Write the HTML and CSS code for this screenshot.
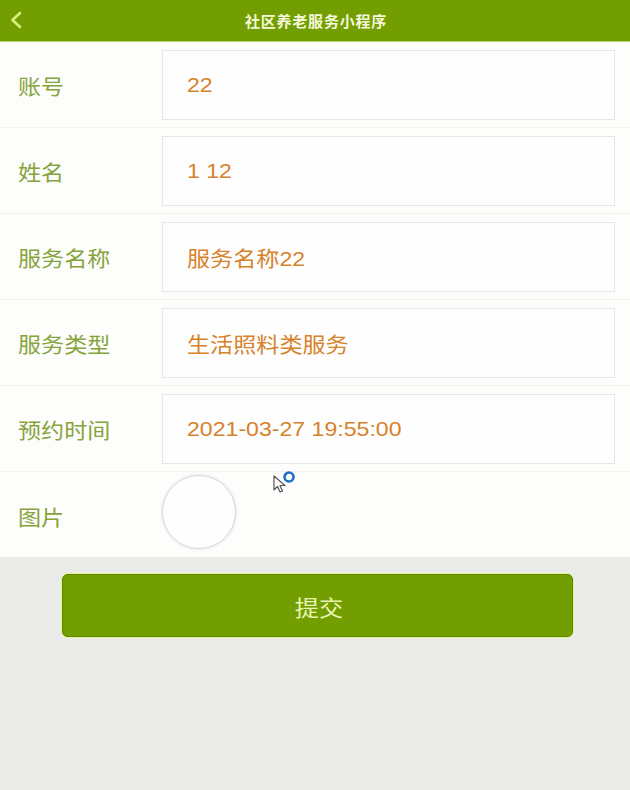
FILE: index.html
```html
<!DOCTYPE html>
<html lang="zh">
<head>
<meta charset="utf-8">
<link rel="stylesheet" href="styles.css">
</head>
<body>
<div class="app">
  <header class="bar">
    <svg class="back" width="14" height="18" viewBox="0 0 14 18"><path d="M11 2 L3.5 9 L11 16" fill="none" stroke="#d9f27a" stroke-width="2.6" stroke-linecap="round" stroke-linejoin="round"/></svg>
    <div class="title">社区养老服务小程序</div>
  </header>
  <main class="form">
    <div class="row"><div class="label"><span class="wide">账号</span></div><div class="field"><span class="wide">22</span></div></div>
    <div class="row"><div class="label"><span class="wide">姓名</span></div><div class="field"><span class="wide">1 12</span></div></div>
    <div class="row"><div class="label"><span class="wide">服务名称</span></div><div class="field"><span class="wide">服务名称22</span></div></div>
    <div class="row"><div class="label"><span class="wide">服务类型</span></div><div class="field"><span class="wide">生活照料类服务</span></div></div>
    <div class="row"><div class="label"><span class="wide">预约时间</span></div><div class="field"><span class="wide">2021-03-27 19:55:00</span></div></div>
    <div class="row row-img">
      <div class="label"><span class="wide">图片</span></div>
      <div class="avatar"></div>
      <svg class="cursor" width="24" height="26" viewBox="0 0 24 26">
        <path d="M2 5 L2 19 L5.5 15.5 L8 21 L10.5 20 L8 14.5 L13 14.5 Z" fill="#fff" stroke="#555" stroke-width="1.2" stroke-linejoin="round"/>
        <circle cx="17" cy="6" r="4.5" fill="none" stroke="#1a6fc9" stroke-width="2.6"/>
      </svg>
    </div>
  </main>
  <div class="actions">
    <button class="submit"><span class="wide">提交</span></button>
  </div>
</div>
</body>
</html>
```

FILE: styles.css
```css
html, body {
  margin: 0;
  padding: 0;
}
body {
  width: 630px;
  height: 790px;
  background: #ebebea;
  font-family: "Liberation Sans", Arial, "Noto Sans CJK SC", sans-serif;
  overflow: hidden;
}
.app {
  display: flex;
  flex-direction: column;
}
.bar {
  height: 41px;
  background: #739e02;
  border-bottom: 1px solid #b9d36a;
  display: flex;
  align-items: center;
  justify-content: center;
  position: relative;
}
.back {
  position: absolute;
  left: 9px;
  top: 11px;
}
.title {
  color: #f4f8d8;
  font-family: "Noto Sans CJK SC", sans-serif;
  font-weight: 700;
  font-size: 15px;
  letter-spacing: 0.8px;
  padding-left: 2px;
}
.wide {
  display: inline-block;
  transform: scaleX(1.1);
  transform-origin: left center;
  white-space: nowrap;
}
.form {
  background: #fdfdfc;
  display: flex;
  flex-direction: column;
}
.row {
  height: 86px;
  box-sizing: border-box;
  border-bottom: 1px solid #f1f1ef;
  display: flex;
  align-items: center;
  padding: 0 15px 0 18px;
  position: relative;
}
.row:last-child {
  border-bottom: none;
  height: 85px;
}
.label {
  width: 144px;
  color: #86a43c;
  font-family: "Noto Sans CJK SC", sans-serif;
  font-size: 21px;
  flex: none;
}
.field {
  flex: 1;
  height: 70px;
  box-sizing: border-box;
  border: 1px solid #e6e6e4;
  background: #fefefe;
  display: flex;
  align-items: center;
  padding-left: 24px;
  color: #d6822a;
  font-size: 21px;
  font-family: "Liberation Sans", Arial, "Noto Sans CJK SC", sans-serif;
}
.row-img .label {
  padding-top: 2px;
}
.avatar {
  width: 72px;
  height: 72px;
  border-radius: 50%;
  background: #fefefe;
  border: 1px solid #dcdcdc;
  box-shadow: 0 0 3px rgba(0,0,0,0.15);
  margin-top: -6px;
}
.cursor {
  position: absolute;
  left: 272px;
  top: -1px;
}
.actions {
  padding: 17px 0 0 62px;
}
.submit {
  width: 511px;
  height: 63px;
  background: #739e02;
  border: 1px solid #5f8400;
  outline: 1px solid #e3f79a;
  border-radius: 5px;
  color: #eaf5b5;
  font-family: "Noto Sans CJK SC", sans-serif;
  font-size: 22px;
  padding: 0 0 0 4px;
}
.submit .wide {
  transform-origin: center;
}
```
